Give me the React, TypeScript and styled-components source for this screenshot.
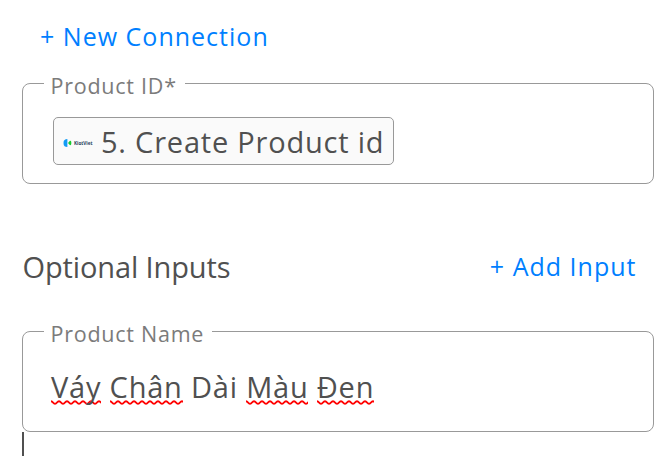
import React from "react";
import styled, { createGlobalStyle } from "styled-components";

const Global = createGlobalStyle`
  *{box-sizing:border-box}
  body{margin:0;background:#fff;font-family:"Open Sans",sans-serif;color:#505050;overflow:hidden}
`;
const Page = styled.main`
  height:456px;padding:0 18px 0 22px;display:flex;flex-direction:column;overflow:hidden;
`;
const LinkButton = styled.button<{ $top?: boolean }>`
  border:0;background:none;padding:0;font:400 25px/34px "Open Sans",sans-serif;letter-spacing:1.01px;
  color:#007fff;white-space:nowrap;
  ${p => p.$top ? "align-self:flex-start;margin:19px 0 21px 18px;" : "margin:0 17.5px 2px 0;"}
`;
const Field = styled.fieldset`
  margin:0;padding:0 0 0 28px;height:110px;min-width:0;border:1px solid #999;border-radius:8px;
`;
const Legend = styled.legend`
  margin-left:-7px;padding:0 8px 0 6.5px;height:19px;font-size:21.5px;line-height:24px;letter-spacing:.75px;color:#7b7b7b;white-space:nowrap;
`;
const Chip = styled.div`
  display:flex;align-items:center;width:341px;height:48px;margin:24px 0 0 2px;padding-left:9px;
  border:1px solid #999;border-radius:5px;background:#fafafa;font-size:29px;letter-spacing:.79px;white-space:nowrap;
`;
const Logo = styled.svg`width:30px;height:10px;margin:3px 8px 0 0;flex:none;`;
const SectionHead = styled.div`
  display:flex;justify-content:space-between;align-items:center;height:40px;margin:63px 0 35px;
`;
const Title = styled.h2`margin:0 0 0 .5px;font-size:29px;font-weight:400;line-height:40px;letter-spacing:-.12px;`;
const Value = styled.div`margin-top:26px;font-size:29px;line-height:40px;letter-spacing:.78px;white-space:nowrap;`;
const wave = `<svg xmlns="http://www.w3.org/2000/svg" width="8" height="5" viewBox="0 0 8 5"><path d="M-2 2.5Q0 0 2 2.5T6 2.5T10 2.5" fill="none" stroke="red" stroke-width="2"/></svg>`;
const Misspelt = styled.span`
  background:url('data:image/svg+xml,${encodeURIComponent(wave)}') repeat-x left bottom 1px;
`;
const Cursor = styled.div`width:2px;height:24px;background:#505050;flex:none;`;

export default function App() {
  return <><Global /><Page>
    <LinkButton $top>+ New Connection</LinkButton>
    <Field><Legend>Product ID*</Legend>
      <Chip><Logo viewBox="0 0 30 10"><path d="M.5 5C.5 2 2 1 4.4 1V9C2 9 .5 8 .5 5Z" fill="#129bf5"/><path d="M5 5L6.5 3.2C7.8 2.4 8.3 3 8.3 5S7.8 7.6 6.5 6.8Z" fill="#16cc30"/><text x="11" y="6.8" fontSize="4.8" fontWeight="700" letterSpacing="0" fill="#28415f" textLength="18.5" lengthAdjust="spacingAndGlyphs">KiotViet</text></Logo>5. Create Product id</Chip>
    </Field>
    <SectionHead><Title>Optional Inputs</Title><LinkButton>+ Add Input</LinkButton></SectionHead>
    <Field><Legend>Product Name</Legend>
      <Value><Misspelt>Váy</Misspelt> <Misspelt>Chân</Misspelt> Dài <Misspelt>Màu</Misspelt> <Misspelt>Đen</Misspelt></Value>
    </Field>
    <Cursor />
  </Page></>;
}
